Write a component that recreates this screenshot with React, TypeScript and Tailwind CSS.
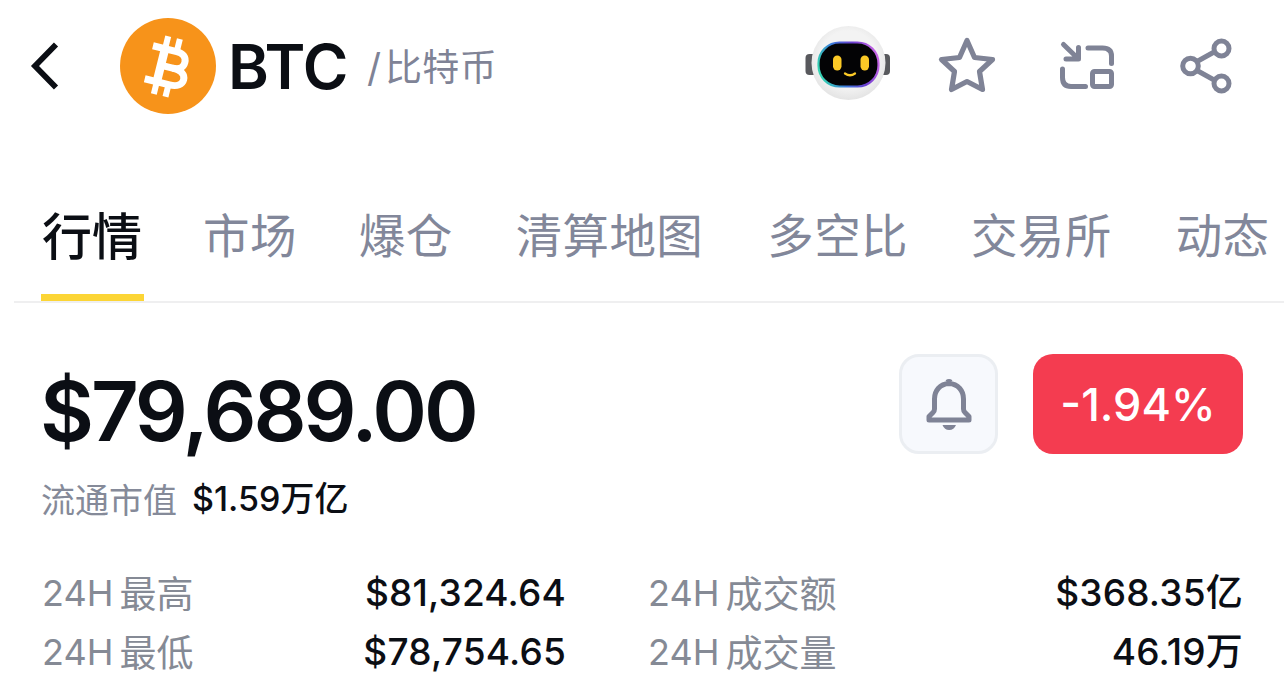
type TTab = {
  label: string;
  className: string;
};

const tabs: TTab[] = [
  { label: "市场", className: "ml-[59px]" },
  { label: "爆仓", className: "ml-[62px]" },
  { label: "清算地图", className: "ml-[63px]" },
  { label: "多空比", className: "ml-[64px]" },
  { label: "交易所", className: "ml-[63px]" },
  { label: "动态", className: "ml-[64px]" },
];

const stats = [
  [
    { label: "最高", value: "$81,324.64", unit: "" },
    { label: "成交额", value: "$368.35", unit: "亿" },
  ],
  [
    { label: "最低", value: "$78,754.65", unit: "" },
    { label: "成交量", value: "46.19", unit: "万" },
  ],
];

const BackIcon = () => (
  <svg className="ml-[28px] h-[56px] w-[34px] shrink-0" viewBox="0 0 34 56" fill="none">
    <path d="M28 6.500 7 28l21 21.500" stroke="#0b0e14" strokeWidth="5.800" />
  </svg>
);

const BitcoinIcon = () => (
  <svg className="ml-[58px] size-24 shrink-0" viewBox="0 0 96 96" fill="none">
    <circle cx="48" cy="48" r="48" fill="#f7931a" />
    <g transform="translate(48 48) rotate(14)" stroke="#fff" strokeWidth="7">
      <path d="M-19.500-16H5C12-16 15.500-12.500 15.500-7.500S12 1 5 1H-6.500" />
      <path d="M5 1C14 1 18.500 4.500 18.500 9.500S14 18 6 18H-19.500" />
      <path d="M-7-16V18" strokeWidth="8.500" />
      <path d="M-7-29V-16M5-29V-16M-7 18V30.500M5 18V30.500" strokeWidth="6" />
    </g>
  </svg>
);

const RobotIcon = () => (
  <svg className="h-[80px] w-[90px] shrink-0" viewBox="0 0 90 80" fill="none">
    <defs>
      <radialGradient id="head" cx="0.5" cy="0.45" r="0.55">
        <stop offset="0.7" stopColor="#f3f3f3" />
        <stop offset="1" stopColor="#e4e4e4" />
      </radialGradient>
      <linearGradient id="rim" x1="15" y1="50" x2="77" y2="30" gradientUnits="userSpaceOnUse">
        <stop stopColor="#35dcae" />
        <stop offset="0.35" stopColor="#3b78dc" />
        <stop offset="0.65" stopColor="#6b3fd0" />
        <stop offset="1" stopColor="#d56be8" />
      </linearGradient>
    </defs>
    <rect x="2.500" y="30" width="12" height="21" rx="4" fill="#58595d" />
    <rect x="76" y="30" width="11" height="21" rx="4" fill="#58595d" />
    <circle cx="45.500" cy="39" r="37" fill="url(#head)" />
    <rect x="15.500" y="18.500" width="60" height="44" rx="21" fill="#030305" stroke="url(#rim)" strokeWidth="2.200" />
    <rect x="30" y="31.500" width="8.500" height="15" rx="4.200" fill="#fbc926" />
    <rect x="57.500" y="31.500" width="8.500" height="15" rx="4.200" fill="#fbc926" />
    <path d="M42 49.500q5 3.500 10 0" stroke="#fbc926" strokeWidth="2.300" strokeLinecap="round" />
  </svg>
);

const StarIcon = () => (
  <svg className="h-[60px] w-[60px] shrink-0" viewBox="0 0 60 60" fill="none">
    <path
      d="M30 4.500 37.500 21.500 55.500 23.500 42.500 35.500 45.500 53.500 30 45.500 14.500 53.500 17.500 35.500 4.500 23.500 22.500 21.500Z"
      stroke="#7f8396"
      strokeWidth="5.200"
      strokeLinejoin="round"
    />
  </svg>
);

const FloatIcon = () => (
  <svg
    className="h-[60px] w-[60px] shrink-0"
    viewBox="0 0 60 60"
    fill="none"
    stroke="#7f8396"
    strokeWidth="5"
    strokeLinecap="round"
    strokeLinejoin="round"
  >
    <path d="M6.500 8.500 21 22.500M21.500 11.500v11.500H9" />
    <path d="M31 12h14.500q9 0 9 8v7.500M5.500 33v8.500q0 9 8.500 9h14.500" />
    <rect x="35.500" y="35.500" width="19" height="15" rx="2" />
  </svg>
);

const ShareIcon = () => (
  <svg className="h-[60px] w-[60px] shrink-0" viewBox="0 0 60 60" fill="none" stroke="#7f8396" strokeWidth="5">
    <circle cx="13.500" cy="30" r="7.800" />
    <circle cx="44.500" cy="12.500" r="7.500" />
    <circle cx="44.500" cy="47.500" r="7.500" />
    <path d="M20 25.500 38 15.500M20 34.500 38 44.500" />
  </svg>
);

const BellIcon = () => (
  <svg className="h-[56px] w-[52px]" viewBox="0 0 52 56" fill="none">
    <path
      d="M26 7.500C17 8 11.500 14.500 11.500 23v10q0 2-1.500 3.500l-4 4v3.500h40v-3.500l-4-4q-1.500-1.500-1.500-3.500V23c0-8.500-5.500-15-14.500-15.500Z"
      stroke="#7f8396"
      strokeWidth="5"
      strokeLinejoin="round"
    />
    <path d="M23.500 5.500q2.500-2 5 0" stroke="#7f8396" strokeWidth="3" />
    <path d="M19.500 49h13.500q-2 5-6.800 5t-6.700-5Z" fill="#7f8396" />
  </svg>
);

const Header = () => (
  <header className="flex h-[132px] items-center">
    <BackIcon />
    <BitcoinIcon />
    <h1 className="ml-[12px] w-[122px] whitespace-nowrap pt-px text-[62px] font-semibold leading-[72px] tracking-[-0.800px]">
      BTC
    </h1>
    <span className="ml-[17px] flex w-[140px] gap-[4px] whitespace-nowrap pt-[4px] leading-[48px] text-[#7f8396]">
      <span className="text-[39px]">/</span>
      <span className="text-[37px] tracking-[0.300px]">比特币</span>
    </span>
    <div className="ml-auto flex items-center pr-[47px]">
      <div className="-mt-1">
        <RobotIcon />
      </div>
      <div className="ml-[44px]">
        <StarIcon />
      </div>
      <div className="ml-[60px]">
        <FloatIcon />
      </div>
      <div className="ml-[60px]">
        <ShareIcon />
      </div>
    </div>
  </header>
);

const TabBar = () => (
  <nav className="ml-[14px] mt-[62px] flex h-[109px] border-b-2 border-[#efeff0] pl-[27px]">
    <div className="h-[107px] w-[103px] shrink-0 border-b-[7px] border-[#fcd535]">
      <span className="whitespace-nowrap pl-px text-[50px] font-medium leading-[86px]">行情</span>
    </div>
    {tabs.map((tab) => (
      <span
        key={tab.label}
        className={`shrink-0 whitespace-nowrap text-[46.5px] leading-[85px] tracking-[0.4px] text-[#82879a] ${tab.className}`}
      >
        {tab.label}
      </span>
    ))}
  </nav>
);

const Price = () => (
  <section className="mt-[51px] flex h-[172px] justify-between pl-[40px] pr-[41px]">
    <div>
      <p className="whitespace-nowrap text-[83px] font-semibold leading-[114px] tracking-[-3.100px]">$79,689.00</p>
      <p className="flex whitespace-nowrap pl-px text-[34px] leading-[62px]">
        <span className="pt-[2px] text-[#858a99]">流通市值</span>
        <span className="ml-[15px] font-medium">$1.59万亿</span>
      </p>
    </div>
    <div className="flex h-[100px] gap-[35px]">
      <button className="flex w-[99px] items-center justify-center rounded-[20px] border-[3px] border-[#ebeef2] bg-[#f7f9fd]">
        <BellIcon />
      </button>
      <div className="flex w-[210px] items-center justify-center rounded-[20px] bg-[#f43c50] pt-px text-[45px] font-medium text-white">
        -1.94%
      </div>
    </div>
  </section>
);

const Stats = () => (
  <section className="mt-[38px] flex flex-col pl-[42px] pr-[41px]">
    {stats.map((row) => (
      <div key={row[0].label} className="flex h-[59px] items-center gap-[82px] text-[37px] leading-[59px]">
        {row.map((item, i) => (
          <div key={item.label} className={i === 0 ? "flex w-[524px] justify-between" : "flex flex-1 justify-between"}>
            <span className="flex gap-[6px] whitespace-nowrap text-[#858a95]">
              <span className="pt-px text-[36px]">24H</span>
              <span className="pt-[2px]">{item.label}</span>
            </span>
            <span className="whitespace-nowrap font-medium tracking-[0.200px]">
              {item.value}
              {item.unit}
            </span>
          </div>
        ))}
      </div>
    ))}
  </section>
);

const App = () => {
  return (
    <main className="h-[694px] w-[1284px] overflow-hidden bg-white font-['Inter','Noto_Sans_CJK_SC',sans-serif] text-[#0b0e14]">
      <Header />
      <TabBar />
      <Price />
      <Stats />
    </main>
  );
};

export default App;
